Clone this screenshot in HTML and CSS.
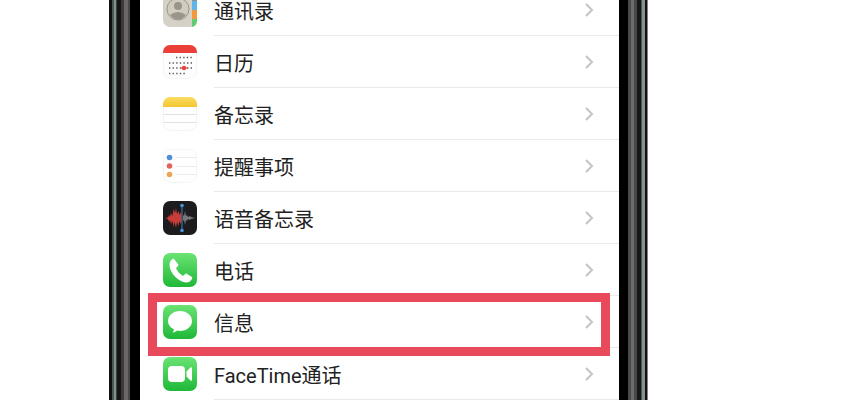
FILE: index.html
```
<!DOCTYPE html>
<html lang="zh-CN">
<head>
  <meta charset="UTF-8">
  <title>设置</title>
  <link rel="stylesheet" href="styles.css">
</head>
<body>
  <div class="phone">
    <div class="bezel bezel-left"></div>
    <nav class="list">
      <a class="row" href="#contacts">
        <svg class="icon" viewBox="0 0 34 34">
          <rect width="34" height="34" rx="7" fill="#d5d1c6"/>
          <path d="M29 0a5 7 0 0 1 5 7v2h-5z" fill="#8d8f8c"/>
          <path d="M29 8h5v9h-5z" fill="#5fb5ea"/>
          <path d="M29 17h5v9h-5z" fill="#f39a3c"/>
          <path d="M29 26h5v1a7 7 0 0 1-5 7z" fill="#5fcb72"/>
          <circle cx="15" cy="16" r="11" fill="#d0ccc0" stroke="#9b978d"/>
          <circle cx="15" cy="13" r="4" fill="#99958b"/>
          <path d="M7 22q8-6 16 0-8 9-16 0z" fill="#99958b"/>
        </svg>
        <span class="name">通讯录</span>
        <svg class="arrow" viewBox="0 0 10 16"><path d="M2 2l6 6-6 6"/></svg>
      </a>
      <a class="row" href="#calendar">
        <svg class="icon" viewBox="0 0 34 34">
          <rect x=".5" y=".5" width="33" height="33" rx="7" fill="#fdfdfd" stroke="#f5f5f5"/>
          <path d="M0 8V7a7 7 0 0 1 7-7h20a7 7 0 0 1 7 7v1z" fill="#ea3f38"/>
          <g stroke="#5c5c5c" stroke-width="1.4" stroke-dasharray="1.4 2.2">
            <path d="M13 12.500h16M6 18h23M6 23h23M6 28.500h16"/>
          </g>
          <path d="M17 23h8" stroke="#e0483f"/>
          <circle cx="21" cy="23" r="2.300" fill="#e0483f"/>
        </svg>
        <span class="name">日历</span>
        <svg class="arrow" viewBox="0 0 10 16"><path d="M2 2l6 6-6 6"/></svg>
      </a>
      <a class="row" href="#notes">
        <svg class="icon" viewBox="0 0 34 34">
          <defs>
            <linearGradient id="yellow" x2="0" y2="1">
              <stop stop-color="#fbdc62"/>
              <stop offset="1" stop-color="#f3c62f"/>
            </linearGradient>
          </defs>
          <rect x=".5" y=".5" width="33" height="33" rx="7" fill="#fefefe" stroke="#f4f4f4"/>
          <path d="M0 10V7a7 7 0 0 1 7-7h20a7 7 0 0 1 7 7v3z" fill="url(#yellow)"/>
          <path d="M0 17.500h34M0 25.500h34" stroke="#e2e2e2"/>
        </svg>
        <span class="name">备忘录</span>
        <svg class="arrow" viewBox="0 0 10 16"><path d="M2 2l6 6-6 6"/></svg>
      </a>
      <a class="row" href="#reminders">
        <svg class="icon" viewBox="0 0 34 34">
          <rect x=".5" y=".5" width="33" height="33" rx="7" fill="#fefefe" stroke="#f5f5f5"/>
          <path d="M13 8.500h21M13 17.500h21M13 25.500h21" stroke="#ececec"/>
          <circle cx="6.500" cy="8.500" r="2.800" fill="#4f8fd8"/>
          <circle cx="6.500" cy="17" r="2.800" fill="#e4625c"/>
          <circle cx="6.500" cy="25.500" r="2.800" fill="#eba557"/>
        </svg>
        <span class="name">提醒事项</span>
        <svg class="arrow" viewBox="0 0 10 16"><path d="M2 2l6 6-6 6"/></svg>
      </a>
      <a class="row" href="#voice-memos">
        <svg class="icon" viewBox="0 0 34 34">
          <rect width="34" height="34" rx="7" fill="#1c1c1e"/>
          <path d="M2 17l3-.5 1-2.500 1 2 1-4 1.500 3 1-7 1.500 4 1-5 1 6 1.500-3 1 4 1-3 1 3v6l-1 3-1-3-1 5-1.500-4-1 6-1.500-6-1 5-1-6-1.500 3-1-4-1 2-1-3z" fill="#c93c39"/>
          <path d="M20 14l1 1 1-5 1 5 1-1 1 2 2-1 1 1 4 1-4 1-1 1-2-1-1 2-1-1-1 5-1-5-1 1z" fill="#77777a"/>
          <path d="M19 5v24" stroke="#3f83c4"/>
          <circle cx="19" cy="4.500" r="1.800" fill="#4b97de"/>
          <circle cx="19" cy="29.500" r="1.800" fill="#4b97de"/>
        </svg>
        <span class="name">语音备忘录</span>
        <svg class="arrow" viewBox="0 0 10 16"><path d="M2 2l6 6-6 6"/></svg>
      </a>
      <a class="row" href="#phone">
        <svg class="icon" viewBox="0 0 34 34">
          <defs>
            <linearGradient id="green" x2="0" y2="1">
              <stop stop-color="#6be373"/>
              <stop offset="1" stop-color="#1fb838"/>
            </linearGradient>
          </defs>
          <rect width="34" height="34" rx="7" fill="url(#green)"/>
          <path d="M7 9c1-2 3-4 4-3l4 5c1 1 0 2-2 4 1 3 4 6 7 8 2-2 3-3 4-2l5 3c1 1-1 4-3 5-9 3-22-11-19-20z" fill="#fff"/>
        </svg>
        <span class="name">电话</span>
        <svg class="arrow" viewBox="0 0 10 16"><path d="M2 2l6 6-6 6"/></svg>
      </a>
      <a class="row marked" href="#messages">
        <svg class="icon" viewBox="0 0 34 34">
          <rect width="34" height="34" rx="7" fill="url(#green)"/>
          <path d="M17 6c7 0 12 4.500 12 10s-5 10-12 10l-3-.4c-1 1-2.500 1.800-4.500 1.900 1-1 1.500-2 1.300-3.200C7 22.500 5 19.500 5 16 5 10.500 10 6 17 6z" fill="#fff"/>
        </svg>
        <span class="name">信息</span>
        <svg class="arrow" viewBox="0 0 10 16"><path d="M2 2l6 6-6 6"/></svg>
      </a>
      <a class="row" href="#facetime">
        <svg class="icon" viewBox="0 0 34 34">
          <rect width="34" height="34" rx="7" fill="url(#green)"/>
          <rect x="5" y="9" width="17" height="16" rx="4" fill="#fff"/>
          <path d="M23.500 14.500l4-4q1.500-1 1.500 1v11q0 2-1.500 1l-4-4z" fill="#fff"/>
        </svg>
        <span class="name">FaceTime通话</span>
        <svg class="arrow" viewBox="0 0 10 16"><path d="M2 2l6 6-6 6"/></svg>
      </a>
    </nav>
    <div class="bezel bezel-right"></div>
  </div>
</body>
</html>
```

FILE: styles.css
```
body {
  margin: 0;
  background: #fff;
  font-family: Roboto, "Noto Sans CJK SC", sans-serif;
  overflow: hidden;
}
.phone {
  display: flex;
  height: 100vh;
  margin: 0 201px 0 109px;
  overflow: hidden;
}
.bezel {
  flex: none;
}
.bezel-left {
  width: 31px;
  background: linear-gradient(to right,
    #111 0 3px, #4d5754 3px 5px, #82938d 5px 7px, #3a403e 7px 8px,
    #151515 8px 12px, #3d393b 12px 15px, #6c6568 15px 19px,
    #4b4648 19px 21px, #000 21px);
}
.bezel-right {
  width: 29px;
  background: linear-gradient(to right,
    #000 0 9px, #4a4a4a 9px 12px, #6d6b6c 12px 15px, #484848 15px 18px,
    #171717 18px 22px, #4d5754 22px 23px, #82938d 23px 26px,
    #111 26px 28px, #8a7f84 28px);
}
/* the list is scrolled a little, so the first row is cut off */
.list {
  flex: 1;
  margin-top: -16px;
}
.row {
  position: relative;
  display: flex;
  align-items: center;
  height: 52px;
  padding: 0 25px 0 23px;
  color: #222;
  text-decoration: none;
}
.row::after {
  content: "";
  position: absolute;
  left: 74px;
  right: 0;
  bottom: 0;
  height: 1px;
  background: #e9e9e9;
}
.icon {
  flex: none;
  width: 34px;
  height: 34px;
  margin-right: 17px;
}
.name {
  flex: 1;
  padding-top: 3px;
  font-size: 20px;
  line-height: 28px;
}
.arrow {
  width: 10px;
  height: 16px;
  fill: none;
  stroke: #c4c4c6;
  stroke-width: 2;
}
/* red frame round the row */
.marked::before {
  content: "";
  position: absolute;
  z-index: 1;
  top: -3px;
  bottom: -8px;
  left: 8px;
  right: 9px;
  border: 9px solid #e84a5c;
}
```
